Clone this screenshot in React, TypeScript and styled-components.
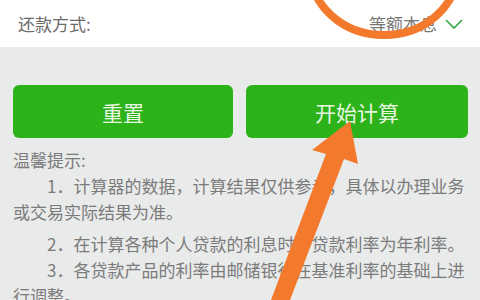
import styled, { createGlobalStyle } from "styled-components";

const GlobalStyle = createGlobalStyle`
    html, body {
        margin: 0;
        padding: 0;
        background: #e9eaea;
    }
    body {
        font-family: "Noto Sans CJK SC", "Noto Sans", sans-serif;
    }
`;

const App = () => {
    return (
        <Page>
            <GlobalStyle />
            {/* repayment method row */}
            <MethodRow>
                <Label>还款方式:</Label>
                <Picker>
                    <span>等额本息</span>
                    <svg width="18" height="12" viewBox="0 0 18 12">
                        <polyline points="1,2 9,10 17,2" fill="none" stroke="#3aa64a" strokeWidth="1.6" />
                    </svg>
                </Picker>
            </MethodRow>

            <ButtonRow>
                <GreenButton>重置</GreenButton>
                <GreenButton>开始计算</GreenButton>
            </ButtonRow>

            <Tips>
                <TipsTitle>温馨提示:</TipsTitle>
                <TipLine>1．计算器的数据，计算结果仅供参考，具体以办理业务或交易实际结果为准。</TipLine>
                <TipLine $gap={6}>2．在计算各种个人贷款的利息时，贷款利率为年利率。</TipLine>
                <TipLine>3．各贷款产品的利率由邮储银行在基准利率的基础上进行调整。</TipLine>
            </Tips>

            {/* orange marks drawn over the screenshot */}
            <Marks width="480" height="300" viewBox="0 0 480 300">
                <ellipse cx="384" cy="-31" rx="74" ry="66" fill="none" stroke="#f37a2c" strokeWidth="8" />
                <polygon
                    points="350,121 358,164 344,159 290,300 271,300 326,154 312,150"
                    fill="#f37a2c"
                />
            </Marks>
        </Page>
    );
};

const Page = styled.div`
    position: relative;
    width: 480px;
    height: 300px;
    overflow: hidden;
    background: #e9eaea;
`;

const MethodRow = styled.div`
    height: 47px;
    background: #ffffff;
    display: flex;
    align-items: center;
    justify-content: space-between;
    padding: 0 17px 0 18px;
    box-sizing: border-box;
    font-size: 17px;
    color: #6b6b6b;
`;

const Label = styled.span`
    line-height: 1;
`;

const Picker = styled.div`
    display: flex;
    align-items: center;
    gap: 8px;
    color: #777777;
    line-height: 1;
`;

const ButtonRow = styled.div`
    display: grid;
    grid-template-columns: 220px 222px;
    gap: 13px;
    padding: 38px 12px 0 13px;
`;

const GreenButton = styled.button`
    height: 53px;
    border: none;
    border-radius: 6px;
    background: #2db31a;
    color: #e9f6e2;
    font-family: "Noto Sans CJK SC", sans-serif;
    font-size: 21px;
    padding: 0;
`;

const Tips = styled.div`
    padding: 9px 12px 0 13px;
    color: #7b7b7b;
    font-size: 17px;
    line-height: 26px;
`;

const TipsTitle = styled.div``;

const TipLine = styled.div<{ $gap?: number }>`
    text-indent: 2em;
    margin-top: ${(p) => p.$gap || 0}px;
`;

const Marks = styled.svg`
    position: absolute;
    left: 0;
    top: 0;
    pointer-events: none;
`;

export default App;
